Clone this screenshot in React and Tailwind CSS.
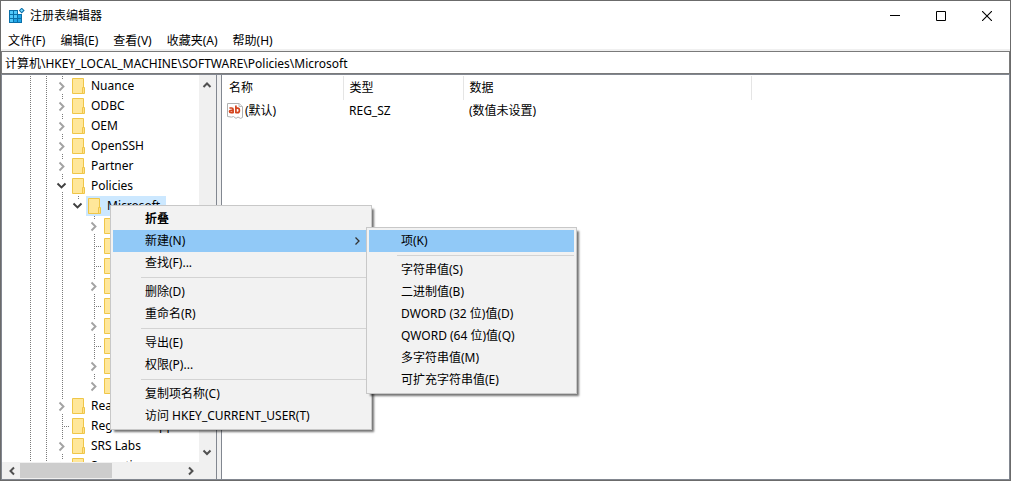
import clsx from "clsx";

const TREE = [
  { name: "Nuance", level: 2, node: "closed" },
  { name: "ODBC", level: 2, node: "closed" },
  { name: "OEM", level: 2, node: "closed" },
  { name: "OpenSSH", level: 2, node: "closed" },
  { name: "Partner", level: 2, node: "closed" },
  { name: "Policies", level: 2, node: "open" },
  { name: "Microsoft", level: 3, node: "open", selected: true, last: true },
  { level: 4, node: "closed" },
  { level: 4, node: "leaf" },
  { level: 4, node: "leaf" },
  { level: 4, node: "closed" },
  { level: 4, node: "leaf" },
  { level: 4, node: "closed" },
  { level: 4, node: "leaf" },
  { level: 4, node: "closed" },
  { level: 4, node: "closed", last: true },
  { name: "Realtek", level: 2, node: "closed" },
  { name: "RegisteredApplications", level: 2, node: "leaf" },
  { name: "SRS Labs", level: 2, node: "closed" },
  { name: "Synaptics", level: 2, node: "closed" },
];

const MENUS = ["文件(F)", "编辑(E)", "查看(V)", "收藏夹(A)", "帮助(H)"];

const CONTEXT_MENU = [
  { label: "折叠", bold: true },
  { label: "新建(N)", sub: true },
  { label: "查找(F)..." },
  null,
  { label: "删除(D)" },
  { label: "重命名(R)" },
  null,
  { label: "导出(E)" },
  { label: "权限(P)..." },
  null,
  { label: "复制项名称(C)" },
  { label: "访问 HKEY_CURRENT_USER(T)" },
];

const NEW_MENU = [
  { label: "项(K)", active: true },
  null,
  { label: "字符串值(S)" },
  { label: "二进制值(B)" },
  { label: "DWORD (32 位)值(D)" },
  { label: "QWORD (64 位)值(Q)" },
  { label: "多字符串值(M)" },
  { label: "可扩充字符串值(E)" },
];

function AppIcon() {
  return (
    <svg className="w-4 h-4 shrink-0" viewBox="0 0 16 16" aria-hidden="true">
      <path d="M0 2h9v4h4v9H0z" fill="#0a6fa8" />
      <path d="M1 3h3v3H1zM5 3h3v3H5zM1 7h3v3H1zM1 11h3v3H1zM5 7h3v3H5z" fill="#4fc8fa" />
      <path d="M5 11h3v3H5zM9 7h3v3H9zM9 11h3v3H9z" fill="#1fa4e6" />
      <path d="M12.700 -.4L15.700 2.500L12.700 5.400L9.800 2.500z" fill="#0a6fa8" />
      <path d="M12.700 1L14.200 2.500L12.700 4L11.200 2.500z" fill="#7fdcff" />
    </svg>
  );
}

function Folder() {
  return (
    <svg className="w-[13px] h-4 shrink-0" viewBox="0 0 13 16" aria-hidden="true">
      <path d="M.5.5h11v15H.5z" fill="#ffe79a" stroke="#efc648" />
      <path d="M10.5 9.5h2v6h-2z" fill="#ffe08a" stroke="#efc648" />
    </svg>
  );
}

function StringIcon() {
  return (
    <svg className="w-4 h-4 shrink-0" viewBox="0 0 16 16" aria-hidden="true">
      <path
        d="M.5.5h11.500l3.500 3v11l-2 .9l-2.500-1.400l-2 1.400l-2.500-1.900l-2 .6l-4-.6z"
        fill="#fff"
        stroke="#b0b0b0"
      />
      <path d="M12 .5v3h3.500" fill="#eee" stroke="#bdbdbd" />
      <g fill="none" stroke="#d4431c" strokeWidth="1.700">
        <path d="M2.400 5h2.200q1.500 0 1.500 1.400v3.900M6.100 7.300H4.200q-1.700 0-1.700 1.200T4.200 9.700h1.900" />
        <path d="M8.900 2.500v7.800M8.900 5.200h1.600q1.900 0 1.900 2.200t-1.900 2.300H8.900" />
      </g>
    </svg>
  );
}

// Dotted connector line with the expander on top of it
function Branch({ node, last }) {
  return (
    <svg className="w-4 h-5 shrink-0" viewBox="0 0 16 20" aria-hidden="true">
      <g stroke="#7a7a7a" strokeDasharray="1 1">
        {node === "line" && <path d="M8.500 0v20" />}
        {node === "leaf" && <path d="M8.500 0v20M10 10.500h6" />}
        {node === "closed" && <path d={last ? "M8.500 0v3" : "M8.500 0v3M8.500 18v2"} />}
        {node === "open" && <path d={last ? "M8.500 0v3" : "M8.500 0v3M8.500 16v4"} />}
      </g>
      {node === "closed" && (
        <path d="M5.500 6.500l4 4l-4 4" fill="none" stroke="#a3a3a3" strokeWidth="1.900" />
      )}
      {node === "open" && (
        <path d="M3.500 7.500l4 4l4-4" fill="none" stroke="#404040" strokeWidth="1.900" />
      )}
    </svg>
  );
}

function TreeRow({ item }) {
  const guides = [];
  for (let i = 0; i < item.level; i++) {
    guides.push(<Branch key={i} node={i === 3 ? "none" : "line"} />);
  }
  return (
    <li className="flex items-center h-5">
      {guides}
      <Branch node={item.node} last={item.last} />
      <button
        className={clsx(
          "flex items-center gap-1.5 h-5 pl-0.5 pr-1.5 shrink-0",
          item.selected && "bg-[#cce8ff]",
        )}
      >
        <Folder />
        {item.name && <span>{item.name}</span>}
      </button>
    </li>
  );
}

const ARROWS = {
  up: "M4.500 10l3.500-3.500L11.500 10",
  down: "M4.500 6.500L8 10l3.500-3.500",
  left: "M10 4.500L6.500 8l3.500 3.500",
  right: "M6 4.500L9.500 8L6 11.500",
};

function ScrollButton({ dir, label }) {
  return (
    <button aria-label={label} className="flex items-center justify-center w-4 h-4 shrink-0">
      <svg className="w-4 h-4" viewBox="0 0 16 16" aria-hidden="true">
        <path d={ARROWS[dir]} fill="none" stroke="#505050" strokeWidth="2" />
      </svg>
    </button>
  );
}

function MenuPanel({ items, className }) {
  return (
    <ul
      role="menu"
      className={clsx(
        "absolute p-0.5 border border-[#c8c8c8] bg-[#f2f2f2] shadow-[3px_3px_2px_-1px_rgba(0,0,0,0.55)]",
        className,
      )}
    >
      {items.map((item, i) =>
        item === null ? (
          <li key={i} role="separator" className="flex items-center h-[7px] pl-7">
            <span className="w-full h-px bg-[#d3d3d3]" />
          </li>
        ) : (
          <li key={i} role="none" className="relative">
            <button
              role="menuitem"
              className={clsx(
                "flex items-center justify-between w-full h-[22px] pl-8 pr-2 whitespace-nowrap",
                (item.active || item.sub) && "bg-[#91c9f7]",
                item.bold && "font-bold",
              )}
            >
              {item.label}
              {item.sub && (
                <svg className="w-2 h-2.5" viewBox="0 0 8 10" aria-hidden="true">
                  <path d="M2.500 1.500L6 5L2.500 8.500" fill="none" stroke="#333" strokeWidth="1.300" />
                </svg>
              )}
            </button>
            {item.sub && (
              <MenuPanel items={NEW_MENU} className="left-full -ml-[3px] -top-[3px] w-[211px] z-10" />
            )}
          </li>
        ),
      )}
    </ul>
  );
}

function TitleBar() {
  return (
    <header className="flex items-center h-[30px] pl-2">
      <AppIcon />
      <h1 className="ml-[5px] flex-1">注册表编辑器</h1>
      <button aria-label="最小化" className="w-[46px] h-full flex items-center justify-center">
        <svg className="w-2.5 h-2.5" viewBox="0 0 10 10">
          <path d="M0 4.500h10" stroke="#000" />
        </svg>
      </button>
      <button aria-label="最大化" className="w-[46px] h-full flex items-center justify-center">
        <svg className="w-2.5 h-2.5" viewBox="0 0 10 10">
          <path d="M.5.5h9v9h-9z" fill="none" stroke="#000" />
        </svg>
      </button>
      <button aria-label="关闭" className="w-[46px] h-full flex items-center justify-center">
        <svg className="w-2.5 h-2.5" viewBox="0 0 10 10">
          <path d="M0 0l10 10M10 0L0 10" stroke="#000" strokeWidth="1.100" />
        </svg>
      </button>
    </header>
  );
}

function TreePane() {
  return (
    <nav
      aria-label="注册表项"
      className="flex flex-col w-[215px] shrink-0 min-h-0 border-r border-[#828790] bg-white"
    >
      <div className="flex flex-1 min-h-0">
        <ul className="flex-1 min-w-0 overflow-hidden pl-5 pt-px">
          {TREE.map((item, i) => (
            <TreeRow key={i} item={item} />
          ))}
        </ul>
        <div className="flex flex-col justify-between w-[17px] bg-[#f0f0f0] py-0.5">
          <ScrollButton dir="up" label="向上滚动" />
          <ScrollButton dir="down" label="向下滚动" />
        </div>
      </div>
      <div className="flex items-center h-[17px] bg-[#f0f0f0] pl-0.5">
        <ScrollButton dir="left" label="向左滚动" />
        <div className="flex-1 h-[15px]">
          <div className="w-[92px] h-full bg-[#cdcdcd]" />
        </div>
        <ScrollButton dir="right" label="向右滚动" />
        <div className="w-[17px]" />
      </div>
    </nav>
  );
}

function ValuePane() {
  return (
    <main className="flex-1 min-w-0 border-l border-[#828790] bg-white pt-px pl-px">
      <table className="table-fixed w-[528px] border-collapse text-left">
        <thead>
          <tr className="h-6">
            <th className="w-[120px] pl-1.5 font-normal border-r border-[#e5e5e5]">名称</th>
            <th className="w-[120px] pl-1.5 font-normal border-r border-[#e5e5e5]">类型</th>
            <th className="w-[288px] pl-1.5 font-normal border-r border-[#e5e5e5]">数据</th>
          </tr>
        </thead>
        <tbody>
          <tr className="h-[22px]">
            <td className="pl-1">
              <div className="flex items-center gap-0.5">
                <StringIcon />
                (默认)
              </div>
            </td>
            <td className="pl-1.5">REG_SZ</td>
            <td className="pl-1.5">(数值未设置)</td>
          </tr>
        </tbody>
      </table>
    </main>
  );
}

export default function App() {
  return (
    <div className="relative flex flex-col h-screen overflow-hidden border border-[#6b6b6b] bg-white text-black text-[12px] leading-4 font-['Noto_Sans','Noto_Sans_CJK_SC',sans-serif]">
      <TitleBar />
      <div role="menubar" className="flex items-center gap-[15px] h-[18px] px-[7px] pt-0.5">
        {MENUS.map((m) => (
          <button key={m} role="menuitem">
            {m}
          </button>
        ))}
      </div>
      <div className="h-0.5 bg-[#f0f0f0]" />
      <input
        type="text"
        aria-label="地址"
        defaultValue="计算机\HKEY_LOCAL_MACHINE\SOFTWARE\Policies\Microsoft"
        className="h-[23px] px-[3px] border border-[#7a7a7a] bg-white outline-none"
      />
      <div className="flex flex-1 min-h-0 bg-[#f0f0f0] gap-1 border-x border-y border-[#828790]">
        <TreePane />
        <ValuePane />
      </div>
      <MenuPanel items={CONTEXT_MENU} className="left-[109px] top-[204px] w-[262px]" />
    </div>
  );
}
